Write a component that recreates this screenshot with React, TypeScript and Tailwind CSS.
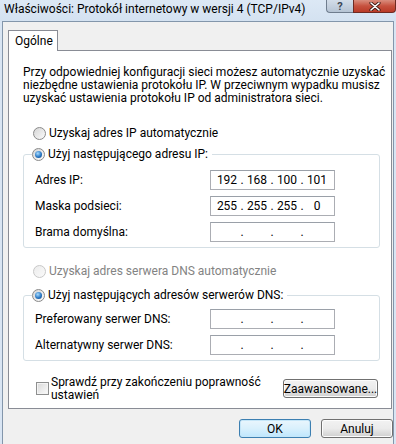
import React from 'react';

const Radio = ({ checked = false, disabled = false }: { checked?: boolean; disabled?: boolean }) => (
  <span
    className={`w-[13px] h-[13px] rounded-full border flex items-center justify-center shrink-0 ${
      disabled
        ? 'border-[#c8c8c8] bg-gradient-to-br from-[#ececec] to-[#fafafa]'
        : 'border-[#8a8a8a] bg-gradient-to-br from-[#d6d6d6] to-[#fbfbfb]'
    }`}
  >
    {checked && (
      <span className="w-[7px] h-[7px] rounded-full bg-[radial-gradient(circle_at_40%_35%,#a8dcff,#2a78c4_55%,#0d3f7a)]" />
    )}
  </span>
);

const IpField = ({ parts }: { parts?: string[] }) => {
  const p = parts ?? ['', '', '', ''];
  return (
    <div className="w-[125px] h-[20px] border border-[#abadb3] border-t-[#9aa0a8] bg-white flex items-center pl-[4px] leading-none">
      {p.map((v, i) => (
        <React.Fragment key={i}>
          <span className="w-[24px] text-center">{v}</span>
          {i < 3 && <span className="w-[6px] text-center">.</span>}
        </React.Fragment>
      ))}
    </div>
  );
};

const Row = ({ label, parts }: { label: string; parts?: string[] }) => (
  <div className="flex items-center h-[20px]">
    <span className="w-[175px]">{label}</span>
    <IpField parts={parts} />
  </div>
);

const Button = ({ label, primary = false, w }: { label: string; primary?: boolean; w: string }) => (
  <button
    className={`${w} h-[19px] rounded-[3px] border leading-none flex items-center justify-center ${
      primary
        ? 'border-[#3c7fb1] bg-gradient-to-b from-[#eaf6fd] via-[#d9f0fc] to-[#bee6fd] shadow-[inset_0_0_0_1px_#c5e6f8]'
        : 'border-[#707070] bg-gradient-to-b from-[#f2f2f2] via-[#ebebeb] to-[#cfcfcf] shadow-[inset_0_0_0_1px_#fcfcfc]'
    }`}
  >
    {label}
  </button>
);

export default function App() {
  return (
    <div className="w-[396px] h-[444px] overflow-hidden bg-[#d9e5f3] text-black font-['Roboto'] text-[12px]">
      <div className="h-[21px] flex items-start justify-between bg-gradient-to-b from-[#dce8f5] to-[#d4e2f1]">
        <span className="pl-[4px] pt-[2px] leading-[15px] whitespace-nowrap">
          Właściwości: Protokół internetowy w wersji 4 (TCP/IPv4)
        </span>
        <div className="flex">
          <div className="w-[27px] h-[13px] rounded-bl-[4px] border border-t-0 border-r-0 border-[#6f7d8e] bg-gradient-to-b from-[#d3dde9] to-[#b6c4d4] flex items-center justify-center text-[11px] font-bold leading-none text-[#3a4654]">
            ?
          </div>
          <div className="w-[43px] h-[13px] rounded-br-[4px] border border-t-0 border-[#6e2a22] bg-gradient-to-b from-[#d98d7e] via-[#c6513e] to-[#b93a27] flex items-center justify-center">
            <svg width="12" height="9" viewBox="0 0 12 9">
              <path d="M2 1 L10 8 M10 1 L2 8" stroke="#3a1a14" strokeWidth="3.2" strokeLinecap="round" />
              <path d="M2 1 L10 8 M10 1 L2 8" stroke="#ffffff" strokeWidth="1.6" strokeLinecap="round" />
            </svg>
          </div>
        </div>
      </div>

      <div className="ml-[2px] w-[392px] h-[423px] border-l border-t border-r border-[#8396ab] bg-[#f0f0f0] pl-[5px] pt-[8px]">
        <div className="w-[50px] h-[21px] -mb-px relative bg-white border border-b-0 border-[#898c95] pl-[6px] pt-[3px] leading-[15px]">
          Ogólne
        </div>
        <div className="w-[384px] h-[359px] border border-[#898c95] bg-white pl-[14px] pr-[11px] pt-[15px] flex flex-col leading-[13px]">
          <p className="leading-[13px] whitespace-nowrap">
            Przy odpowiedniej konfiguracji sieci możesz automatycznie uzyskać
            <br />
            niezbędne ustawienia protokołu IP. W przeciwnym wypadku musisz
            <br />
            uzyskać ustawienia protokołu IP od administratora sieci.
          </p>

          <div className="mt-[20px] h-[16px] flex items-center gap-[3px] pl-[10px]">
            <Radio />
            <span>Uzyskaj adres IP automatycznie</span>
          </div>

          <fieldset className="mt-[5px] w-[357px] border border-[#d5dfe5] rounded-[3px] pl-[11px] pr-0 pb-[5px] pt-[8px]">
            <legend className="-ml-[3px] pr-[4px] h-[16px] flex items-center gap-[3px]">
              <Radio checked />
              <span>Użyj następującego adresu IP:</span>
            </legend>
            <div className="flex flex-col gap-[6px]">
              <Row label="Adres IP:" parts={['192', '168', '100', '101']} />
              <Row label="Maska podsieci:" parts={['255', '255', '255', '0']} />
              <Row label="Brama domyślna:" />
            </div>
          </fieldset>

          <div className="mt-[15px] h-[16px] flex items-center gap-[3px] pl-[10px] text-[#838383]">
            <Radio disabled />
            <span>Uzyskaj adres serwera DNS automatycznie</span>
          </div>

          <fieldset className="mt-[8px] w-[357px] border border-[#d5dfe5] rounded-[3px] pl-[11px] pr-0 pb-[5px] pt-[6px]">
            <legend className="-ml-[3px] pr-[4px] h-[16px] flex items-center gap-[3px]">
              <Radio checked />
              <span>Użyj następujących adresów serwerów DNS:</span>
            </legend>
            <div className="flex flex-col gap-[6px]">
              <Row label="Preferowany serwer DNS:" />
              <Row label="Alternatywny serwer DNS:" />
            </div>
          </fieldset>

          <div className="mt-[15px] flex items-start pl-[13px]">
            <span className="mt-[6px] w-[13px] h-[13px] border border-[#8e8f8f] bg-gradient-to-br from-[#d9d9d9] to-[#fbfbfb] shadow-[inset_0_0_0_1px_#f4f4f4] shrink-0" />
            <span className="ml-[2px] w-[200px] leading-[13px] whitespace-nowrap">
              Sprawdź przy zakończeniu poprawność
              <br />
              ustawień
            </span>
            <div className="ml-[32px] mt-[3px]">
              <Button label="Zaawansowane..." w="w-[95px]" />
            </div>
          </div>
        </div>

        <div className="flex justify-end gap-[10px] mt-[10px]">
          <Button label="OK" primary w="w-[72px]" />
          <Button label="Anuluj" w="w-[72px]" />
        </div>
      </div>
    </div>
  );
}
